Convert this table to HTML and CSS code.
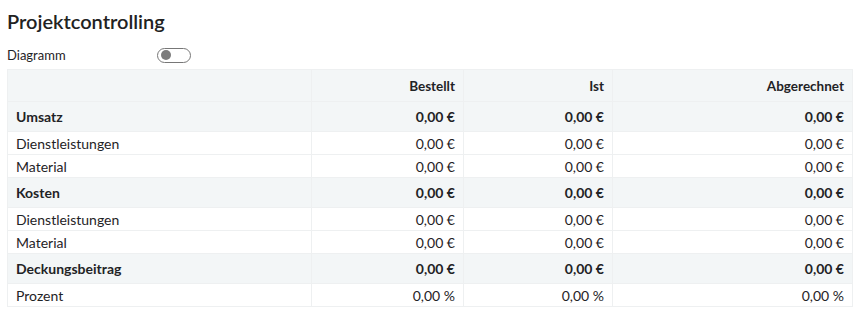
FILE: index.html
```html
<!DOCTYPE html>
<html lang="de">
<head>
<meta charset="utf-8">
<link rel="stylesheet" href="styles.css">
</head>
<body>
<div class="page">
  <h1 class="title">Projektcontrolling</h1>
  <div class="toggle-row">
    <span class="toggle-label">Diagramm</span>
    <span class="toggle"><span class="knob"></span></span>
  </div>
  <table class="grid">
    <thead>
      <tr class="head"><th></th><th>Bestellt</th><th>Ist</th><th>Abgerechnet</th></tr>
    </thead>
    <tbody>
      <tr class="group"><td>Umsatz</td><td>0,00 €</td><td>0,00 €</td><td>0,00 €</td></tr>
      <tr class="item"><td>Dienstleistungen</td><td>0,00 €</td><td>0,00 €</td><td>0,00 €</td></tr>
      <tr class="item"><td>Material</td><td>0,00 €</td><td>0,00 €</td><td>0,00 €</td></tr>
      <tr class="group"><td>Kosten</td><td>0,00 €</td><td>0,00 €</td><td>0,00 €</td></tr>
      <tr class="item"><td>Dienstleistungen</td><td>0,00 €</td><td>0,00 €</td><td>0,00 €</td></tr>
      <tr class="item"><td>Material</td><td>0,00 €</td><td>0,00 €</td><td>0,00 €</td></tr>
      <tr class="group"><td>Deckungsbeitrag</td><td>0,00 €</td><td>0,00 €</td><td>0,00 €</td></tr>
      <tr class="item"><td>Prozent</td><td>0,00 %</td><td>0,00 %</td><td>0,00 %</td></tr>
    </tbody>
  </table>
</div>
</body>
</html>
```
FILE: styles.css
```css
html, body {
  margin: 0;
  padding: 0;
  background: #fff;
}
body {
  font-family: Lato, "Noto Sans", sans-serif;
  color: #1f2326;
}
.page {
  padding: 9px 2px 0 7px;
}
.title {
  margin: 0;
  font-size: 20px;
  font-weight: 600;
  line-height: 24px;
  color: #222;
}
.toggle-row {
  display: flex;
  align-items: center;
  margin-top: 14px;
  height: 16px;
}
.toggle-label {
  font-size: 13px;
  width: 150px;
}
.toggle {
  display: flex;
  align-items: center;
  height: 13px;
  width: 26px;
  border: 1px solid #777;
  border-radius: 8px;
  padding: 0 3px;
}
.knob {
  width: 10px;
  height: 10px;
  border-radius: 50%;
  background: #7b7b7b;
}
.grid {
  margin-top: 6px;
  width: 846px;
  border-collapse: collapse;
  font-size: 14px;
}
.grid th, .grid td {
  border: 1px solid #eef0f1;
  padding: 0 8px;
  text-align: right;
}
.grid th:first-child, .grid td:first-child {
  text-align: left;
  width: 287px;
}
.grid th:nth-child(2), .grid td:nth-child(2) { width: 135px; }
.grid th:nth-child(3), .grid td:nth-child(3) { width: 132px; }
.head th {
  background: #f3f6f7;
  height: 31px;
  font-weight: 700;
  font-size: 13.5px;
  vertical-align: middle;
}
.group td {
  background: #f3f6f7;
  height: 29px;
  font-weight: 700;
  font-size: 14px;
}
.item td {
  height: 22px;
}
```
